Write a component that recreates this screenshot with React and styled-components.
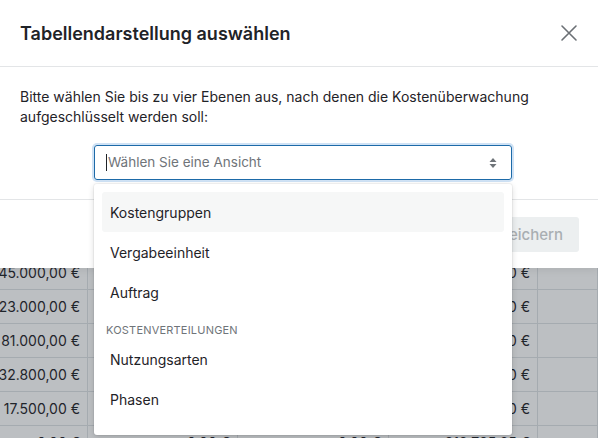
import React from "react";
import styled, { createGlobalStyle } from "styled-components";

const GlobalStyle = createGlobalStyle`
  html, body { margin: 0; padding: 0; }
  body {
    font-family: Inter, "Noto Sans", "Liberation Sans", sans-serif;
    color: #1f2328;
    background: #ffffff;
    width: 598px;
    height: 438px;
    overflow: hidden;
  }
`;

const Page = styled.div`
  position: relative;
  width: 598px;
  height: 438px;
  overflow: hidden;
  background: #fff;
`;

const Table = styled.div`
  display: flex;
  flex-direction: column;
  padding-top: 18px;
`;

const Row = styled.div`
  display: grid;
  grid-template-columns: 88px 150px 151px 149px 1fr;
  height: 34px;
  border-bottom: 1px solid #dfe2e5;
  box-sizing: border-box;
`;

const Cell = styled.div`
  display: flex;
  align-items: center;
  justify-content: flex-end;
  padding-right: 7px;
  font-size: 14px;
  color: #1f2328;
  white-space: nowrap;
  border-right: 1px solid #dfe2e5;
`;

const Backdrop = styled.div`
  position: absolute;
  inset: 0;
  background: rgba(33, 43, 54, 0.3);
`;

const Dialog = styled.div`
  position: absolute;
  top: 0;
  left: 0;
  right: 0;
  height: 268px;
  background: #fff;
  display: flex;
  flex-direction: column;
  box-shadow: 0 2px 8px rgba(0, 0, 0, 0.08);
`;

const Header = styled.div`
  height: 67px;
  box-sizing: border-box;
  display: flex;
  align-items: center;
  justify-content: space-between;
  padding: 0 20px;
  border-bottom: 1px solid #e3e5e7;
`;

const Title = styled.h2`
  margin: 0;
  font-size: 18px;
  font-weight: 600;
  color: #1f2328;
`;

const CloseButton = styled.button`
  border: 0;
  background: none;
  padding: 0;
  width: 20px;
  height: 20px;
  display: flex;
  align-items: center;
  justify-content: center;
  color: #6b7075;
  margin-right: -1px;
`;

const Body = styled.div`
  padding: 20px;
  border-bottom: 1px solid #e3e5e7;
  height: 133px;
  box-sizing: border-box;
`;

const Lead = styled.p`
  margin: 0 0 19px;
  font-size: 14px;
  line-height: 19.5px;
  color: #1f2328;
`;

const SelectBox = styled.div`
  margin-left: 74px;
  width: 418px;
  height: 35px;
  box-sizing: border-box;
  border: 1px solid #1d6aa8;
  border-radius: 3px;
  box-shadow: 0 0 0 2px #cfe2f5;
  display: flex;
  align-items: center;
  justify-content: space-between;
  padding: 0 13px 0 11px;
`;

const Placeholder = styled.span`
  font-size: 13.5px;
  color: #6f7479;
  border-left: 1px solid #1f2328;
  padding-left: 1px;
  line-height: 17px;
`;

const Footer = styled.div`
  flex: 1;
  display: flex;
  align-items: center;
  justify-content: flex-end;
  padding: 0 19px;
`;

const SaveButton = styled.button`
  height: 35px;
  padding: 0 16px;
  border: 0;
  border-radius: 3px;
  background: #eceff0;
  color: #a9aeb2;
  font-family: inherit;
  font-size: 15px;
  font-weight: 500;
`;

const Menu = styled.div`
  position: absolute;
  top: 184px;
  left: 94px;
  width: 418px;
  height: 251px;
  box-sizing: border-box;
  background: #fff;
  border-radius: 3px;
  box-shadow: 0 2px 6px rgba(0, 0, 0, 0.15), 0 0 0 1px rgba(0, 0, 0, 0.04);
  padding: 8px;
  display: flex;
  flex-direction: column;
`;

const Option = styled.div`
  height: 40px;
  display: flex;
  align-items: center;
  padding: 0 8px;
  font-size: 14px;
  color: #1f2328;
  border-radius: 3px;
  background: ${(p) => (p.$active ? "#f6f7f7" : "transparent")};
`;

const GroupLabel = styled.div`
  height: 27px;
  display: flex;
  align-items: flex-end;
  padding: 0 4px 2px;
  box-sizing: border-box;
  font-size: 11px;
  letter-spacing: 0.2px;
  color: #6f7479;
  text-transform: uppercase;
`;

const rows = [
  ["120.000,00 €", "0,00 €", "0,00 €", "120.000,00 €"],
  ["64.000,00 €", "0,00 €", "0,00 €", "64.000,00 €"],
  ["38.500,00 €", "0,00 €", "0,00 €", "38.500,00 €"],
  ["52.000,00 €", "0,00 €", "0,00 €", "52.000,00 €"],
  ["19.900,00 €", "0,00 €", "0,00 €", "19.900,00 €"],
  ["27.300,00 €", "0,00 €", "0,00 €", "27.300,00 €"],
  ["9.600,00 €", "0,00 €", "0,00 €", "9.600,00 €"],
  ["45.000,00 €", "0,00 €", "0,00 €", "45.000,00 €"],
  ["23.000,00 €", "0,00 €", "0,00 €", "23.000,00 €"],
  ["81.000,00 €", "0,00 €", "0,00 €", "81.000,00 €"],
  ["32.800,00 €", "0,00 €", "0,00 €", "32.800,00 €"],
  ["17.500,00 €", "0,00 €", "0,00 €", "17.500,00 €"],
  ["0,00 €", "0,00 €", "0,00 €", "212.725,65 €"],
];

const CloseIcon = () => (
  <svg width="18" height="18" viewBox="0 0 18 18" fill="none">
    <path d="M2 2L16 16M16 2L2 16" stroke="currentColor" strokeWidth="1.6" strokeLinecap="round" />
  </svg>
);

const SortIcon = () => (
  <svg width="10" height="14" viewBox="0 0 10 14">
    <path d="M1.5 6L5 2L8.5 6Z" fill="#6f7479" />
    <path d="M1.5 8L5 12L8.5 8Z" fill="#6f7479" />
  </svg>
);

export default function App() {
  return (
    <>
      <GlobalStyle />
      <Page>
        <Table>
          {rows.map((r, i) => (
            <Row key={i}>
              {r.map((v, j) => (
                <Cell key={j}>{v}</Cell>
              ))}
              <Cell />
            </Row>
          ))}
        </Table>
        <Backdrop />
        <Dialog>
          <Header>
            <Title>Tabellendarstellung auswählen</Title>
            <CloseButton aria-label="Schließen">
              <CloseIcon />
            </CloseButton>
          </Header>
          <Body>
            <Lead>
              Bitte wählen Sie bis zu vier Ebenen aus, nach denen die Kostenüberwachung
              aufgeschlüsselt werden soll:
            </Lead>
            <SelectBox>
              <Placeholder>Wählen Sie eine Ansicht</Placeholder>
              <SortIcon />
            </SelectBox>
          </Body>
          <Footer>
            <SaveButton>Speichern</SaveButton>
          </Footer>
        </Dialog>
        <Menu>
          <Option $active>Kostengruppen</Option>
          <Option>Vergabeeinheit</Option>
          <Option>Auftrag</Option>
          <GroupLabel>Kostenverteilungen</GroupLabel>
          <Option>Nutzungsarten</Option>
          <Option>Phasen</Option>
        </Menu>
      </Page>
    </>
  );
}
